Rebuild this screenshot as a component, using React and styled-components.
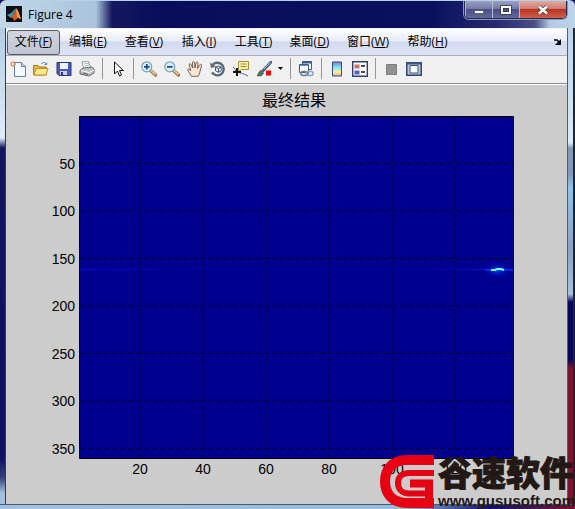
import React from 'react';
import styled, { createGlobalStyle } from 'styled-components';

const Global = createGlobalStyle`
  * { box-sizing: border-box; }
  body { margin: 0; font-family: "Open Sans", "Noto Sans CJK SC", sans-serif; font-size: 12px; color: #000; background: #0c1260; }
  button { font: inherit; color: inherit; margin: 0; }
`;

const Window = styled.main`
  position: relative;
  display: flex;
  flex-direction: column;
  min-height: 100vh;
  overflow: hidden;
  border-top: 1px solid #b4d2ee;
  border-radius: 6px 6px 0 0;
  background: linear-gradient(90deg, #c3d7e8 0, #a9c3dc 96px, #15185f 112px, #090d5c 160px, #0a0f5e 430px, #282c74 500px, #4a5089 535px, #b3cbe2 550px, #bcd4ea 100%);
`;

const TitleBar = styled.header`
  display: flex;
  align-items: flex-start;
  height: 27px;
  padding: 0 8px 0 6px;
`;

const Caption = styled.h1`
  display: flex;
  align-items: center;
  gap: 6px;
  flex: 1;
  height: 26px;
  margin: 0;
  font-size: 12px;
  font-weight: 400;
`;

const WindowButtons = styled.div`
  display: flex;
  height: 18px;
  border: 1px solid #252a4d;
  border-top: 0;
  border-radius: 0 0 5px 5px;
  overflow: hidden;
  box-shadow: 0 0 0 1px #8d96ba;
`;

const WindowButton = styled.button`
  display: grid;
  place-items: center;
  width: ${(p) => (p.$close ? 47 : 27)}px;
  padding: 0;
  border: 0;
  border-left: 1px solid #b5bad3;
  background: ${(p) => (p.$close
    ? 'linear-gradient(#e0aba2, #d07a6c 45%, #b63524 50%, #cf6048)'
    : 'linear-gradient(#9ba0c2, #757ba8 45%, #474f89 50%, #62699b)')};
`;

const Body = styled.div`
  display: grid;
  grid-template-columns: 6px minmax(0, 1fr) 8px;
  flex: 1;
`;

const LeftEdge = styled.div`
  border-right: 1px solid #303c5b;
  background: linear-gradient(#b3cde4, #dcebf8 110px, #11165e 120px, #0c1160 430px, #35447c 450px, #a4c0dc 465px);
`;

const RightEdge = styled.div`
  border-left: 1px solid #4c6077;
  border-right: 2px solid #20242c;
  background: linear-gradient(#bcd4ea, #d9eafa 115px, #8197b5 120px, #8197b5 145px, #93c1eb 160px, #8ba3c1 220px, #a8c0da 266px, #08085a 274px, #08085a 332px, #7c1330 340px);
`;

const Client = styled.div`
  display: flex;
  flex-direction: column;
  min-width: 0;
  background: #ccc;
`;

const MenuBar = styled.nav`
  display: flex;
  align-items: center;
  height: 28px;
  padding: 0 4px 0 1px;
  border-top: 1px solid #eef2fa;
  border-bottom: 1px solid #a9adba;
  background: linear-gradient(#fff, #e8ecf8 45%, #d3daee 50%, #dde3f5);
`;

const MenuButton = styled.button`
  flex: none;
  width: ${(p) => p.$width}px;
  height: 25px;
  padding: 0;
  border: 1px solid ${(p) => (p.$active ? '#555b69' : 'transparent')};
  border-radius: 3px;
  background: ${(p) => (p.$active ? 'linear-gradient(#d2d5e0, #c0c4d1)' : 'transparent')};
  line-height: 22px;
  white-space: nowrap;
`;

const DockButton = styled.button`
  display: grid;
  place-items: center;
  width: 10px;
  height: 14px;
  margin-left: auto;
  padding: 0;
  border: 0;
  background: none;
`;

const ToolBar = styled.div`
  display: flex;
  align-items: center;
  height: 28px;
  padding-bottom: 2px;
  border-bottom: 1px solid #8d8d8d;
  box-shadow: 0 1px #fff;
  background: #f0f0f0;
`;

const ToolButton = styled.button`
  display: grid;
  place-items: center;
  flex: none;
  width: ${(p) => (p.$narrow ? 11 : 23)}px;
  height: 24px;
  padding: 0;
  border: 0;
  background: none;
`;

const Separator = styled.span`
  flex: none;
  width: 1px;
  height: 21px;
  margin: 0 3px 0 4px;
  background: #979797;
`;

const Figure = styled.section`
  flex: 1;
  padding-top: 1px;
`;

const Chart = styled.svg`
  display: block;
  width: 100%;
  font-family: "Liberation Sans", "Noto Sans CJK SC", sans-serif;
  font-size: 14px;
`;

const BottomEdge = styled.div`
  height: 5px;
  border-top: 1px solid #435c75;
  background: linear-gradient(90deg, #a4c0dc, #98bcdc 70%, #101366 85%, #731531);
`;

const Watermark = styled.aside`
  position: absolute;
  right: 0;
  bottom: 0;
  display: flex;
  gap: 4px;
  height: 55px;
`;

const Brand = styled.div`
  display: flex;
  flex-direction: column;
  color: #231815;
  white-space: nowrap;
`;

const BrandName = styled.strong`
  height: 39px;
  font: 900 34px/36px "Noto Sans CJK SC", sans-serif;
  -webkit-text-stroke: 1px #231815;
`;

const BrandUrl = styled.span`
  font: 700 15px/15px "Liberation Sans", sans-serif;
`;

const Icon = ({ children, size = 16 }) => (
  <svg width={size} height={size} viewBox="0 0 16 16" fill="none" aria-hidden="true">{children}</svg>
);

const Magnifier = ({ plus }) => (
  <Icon>
    <path d="M9 9l5.5 5" stroke="#9b7754" strokeWidth="3.4" strokeLinecap="round" />
    <path d="M10 9.5l4 3.6" stroke="#efc18a" strokeWidth="1.8" strokeLinecap="round" />
    <circle cx="5.8" cy="5.8" r="5" fill="#d5f0fb" stroke="#7ca3bb" strokeWidth="1.2" />
    <path d={plus ? 'M3 5.8h5.6M5.8 3v5.6' : 'M3 5.8h5.6'} stroke="#17499a" strokeWidth="1.7" />
  </Icon>
);

const icons = {
  new: (
    <Icon>
      <path d="M4.5 1.5h7l4 4v10h-11z" fill="#f4f9ff" stroke="#6281a5" />
      <path d="M11.5 1.5v4h4" fill="#bcd5ee" stroke="#6281a5" />
      <path d="M3 0v6M0 3h6M1 1l4 4M5 1L1 5" stroke="#d46b4d" />
      <circle cx="3" cy="3" r="1.3" fill="#ffe4a0" />
    </Icon>
  ),
  open: (
    <Icon>
      <path d="M.6 14V4.5h4.5l1 1.5h7v8z" fill="#eab941" stroke="#a77b19" />
      <path d="M1 14l2-6.5h12L13 14z" fill="#ffe88a" stroke="#bc9129" />
      <path d="M8 3c2-2 4-2 5 0M11.7 3.5h2v-2" stroke="#4b78a8" />
    </Icon>
  ),
  save: (
    <Icon>
      <path d="M1 1.5h14v13H3l-2-2z" fill="#4c59b5" stroke="#293477" />
      <path d="M4 2h8v6H4z" fill="#eef3ff" />
      <path d="M4 10h7v4H4z" fill="#cbd0e8" />
      <path d="M5 11h2v3H5z" fill="#28336d" />
    </Icon>
  ),
  print: (
    <Icon>
      <path d="M5 8L3 1l6-1 3 7" fill="#fff" stroke="#8a95a6" />
      <path d="M5 3l4-1M6 5l4-1" stroke="#9aabc0" />
      <path d="M1 9.5L4 7l9-1 2 2v4l-5 3-9-2z" fill="#bcbfc2" stroke="#656b72" />
      <path d="M2 9.5l8 2 5-2.5" stroke="#fff" />
      <path d="M4 12l5 1.5" stroke="#51565b" />
    </Icon>
  ),
  pointer: (
    <Icon>
      <path d="M4.5 1v12l3-3 2 5 2-1-2-4.5h4z" fill="#fff" stroke="#111" />
    </Icon>
  ),
  zoomIn: <Magnifier plus />,
  zoomOut: <Magnifier />,
  hand: (
    <Icon>
      <path d="M4.5 15.3L.8 9.2C.2 8 1.9 7.2 3.8 9.6L2.2 4c-.2-1.5 1.5-1.8 2-.3L5.8 7l-.4-5.2c0-1.6 2-1.6 2.2 0L8 7l1-5c.4-1.5 2.2-1.1 2 .4L10.5 7.5l2.2-3.6c.8-1.2 2.4-.4 1.8 1L13 10.4c-.4 2.2-1.1 3.4-2 4.9z" fill="#ffe5d1" stroke="#65534a" strokeWidth=".9" />
    </Icon>
  ),
  rotate: (
    <Icon>
      <path d="M3 3.5a6.3 6.3 0 1 1-1 7.8" stroke="#59677c" strokeWidth="2.4" />
      <path d="M0 1.5l1 5.5 5-1.5z" fill="#59677c" />
      <path d="M5.5 6.2L8.4 5l2.8 1.2v3.5L8.4 11.3 5.5 9.8zM5.5 6.2l2.9 1.3 2.8-1.3M8.4 7.5v3.8" fill="#edf3f9" stroke="#435570" />
    </Icon>
  ),
  cursor: (
    <Icon>
      <path d="M5.5.5h10v8h-7l-3 2z" fill="#fff0a2" stroke="#a59243" />
      <path d="M7.5 3h6M7.5 5.5h6" stroke="#9d8b45" />
      <path d="M0 6c2 1 2 4 4 5s6 1 11 4" stroke="#5a61bf" />
      <path d="M4 7v8M0 11h8" stroke="#111" strokeWidth="2" />
    </Icon>
  ),
  brush: (
    <Icon>
      <path d="M15 1L7.2 9.5" stroke="#485b7b" strokeWidth="2.8" strokeLinecap="round" />
      <path d="M14.5 1L8 8" stroke="#b9cbe0" />
      <path d="M1 14.5c2-1 1.4-3.6 3.8-5l2.6 2.3C6.6 14.7 3.6 15.4 1 14.5z" fill="#567b58" stroke="#3a4b42" />
      <path d="M10 9.5h5v5h-5z" fill="#f10909" />
    </Icon>
  ),
  link: (
    <Icon>
      <path d="M4.5 .5h9v8h-9z" fill="#fff" stroke="#3a5b8c" />
      <path d="M4.5 1.5h9" stroke="#3a5b8c" strokeWidth="2" />
      <path d="M1.5 3.5h9v8h-9z" fill="#fff" stroke="#3a5b8c" />
      <path d="M2 4.5h8" stroke="#6e90c0" />
      <rect x="3" y="10.5" width="7" height="4" rx="2" stroke="#697a8d" strokeWidth="1.6" />
      <rect x="8" y="10.5" width="7" height="4" rx="2" stroke="#8da1b5" strokeWidth="1.6" />
    </Icon>
  ),
  colorbar: (
    <Icon>
      <defs>
        <linearGradient id="colorbar-fill" x2="0" y2="1">
          <stop stopColor="#7182d7" /><stop offset=".4" stopColor="#83e3ef" /><stop offset=".72" stopColor="#fff3a0" /><stop offset="1" stopColor="#edac91" />
        </linearGradient>
      </defs>
      <path d="M3.5 1h9v14h-9z" fill="url(#colorbar-fill)" stroke="#344d7b" />
    </Icon>
  ),
  legend: (
    <Icon>
      <path d="M.7.7h14.6v14.6H.7z" fill="#fff" stroke="#303f68" strokeWidth="1.4" />
      <path d="M2.5 3.5h5v4h-5z" fill="#d86a64" />
      <path d="M2.5 9.5h5v4h-5z" fill="#5263ce" />
      <path d="M9 5h4M9 11h4" stroke="#111" strokeWidth="1.3" />
    </Icon>
  ),
  hide: (
    <Icon><path d="M3.5 3.5h10v10h-10z" fill="#919191" stroke="#808080" /></Icon>
  ),
  show: (
    <Icon>
      <path d="M.8 1.8h14.4v12.4H.8z" fill="#b9c8e0" stroke="#304369" strokeWidth="1.5" />
      <path d="M1 2.5h14" stroke="#3a568b" strokeWidth="2" />
      <path d="M4 4.5h8v7.5H4z" fill="#fff" stroke="#3c5279" />
    </Icon>
  ),
};

const menus = [
  ['文件', 'F', 53], ['编辑', 'E', 56], ['查看', 'V', 56], ['插入', 'I', 54],
  ['工具', 'T', 55], ['桌面', 'D', 57], ['窗口', 'W', 60], ['帮助', 'H', 59],
];

const tools = [
  [['new', '新建'], ['open', '打开'], ['save', '保存'], ['print', '打印']],
  [['pointer', '编辑绘图']],
  [['zoomIn', '放大'], ['zoomOut', '缩小'], ['hand', '平移'], ['rotate', '三维旋转'], ['cursor', '数据游标'], ['brush', '刷亮'], ['more', '更多颜色']],
  [['link', '链接绘图']],
  [['colorbar', '插入颜色栏'], ['legend', '插入图例']],
  [['hide', '隐藏绘图工具'], ['show', '显示绘图工具']],
];

const xTicks = [20, 40, 60, 80, 100, 120];
const yTicks = [50, 100, 150, 200, 250, 300, 350];
const xAt = (v) => 71 + v * 3.15;
const yAt = (v) => 32 + v * 0.95;

const MatlabLogo = () => (
  <svg width="16" height="16" viewBox="0 0 16 16" aria-hidden="true">
    <path d="M0 0h16v16H0z" fill="#081017" />
    <path d="M1 9l4-2 3-3 2-2-3 8-2 2z" fill="#438fa8" />
    <path d="M5 12l3-4 2-6 2 3 3 8-3-1-4 3-1-3z" fill="#df5426" />
    <path d="M10 2l2 3 3 8-4-2z" fill="#f8a13c" />
  </svg>
);

const ResultChart = () => (
  <Chart viewBox="0 1 561 419" role="img" aria-label="最终结果">
    <defs>
      <radialGradient id="peak-glow">
        <stop stopColor="#126cff" stopOpacity=".8" />
        <stop offset=".5" stopColor="#0820e8" stopOpacity=".35" />
        <stop offset="1" stopColor="#00008f" stopOpacity="0" />
      </radialGradient>
      <linearGradient id="trace">
        <stop stopColor="#0000e0" /><stop offset=".2" stopColor="#0000a4" /><stop offset=".8" stopColor="#0000a4" /><stop offset="1" stopColor="#0012ff" />
      </linearGradient>
    </defs>
    <text x="288" y="22" textAnchor="middle" fontSize="16">最终结果</text>
    <path d="M73.5 32.5h434v342h-434z" fill="#00008f" stroke="#000" />
    <path d="M74 185h433v1H74z" fill="url(#trace)" />
    {xTicks.map((v) => <path key={v} d={`M${xAt(v)} 33V374`} stroke="#000030" strokeDasharray="5 3" />)}
    {yTicks.map((v) => <path key={v} d={`M74 ${yAt(v)}H507`} stroke="#000030" strokeDasharray="5 3" />)}
    <ellipse cx="491" cy="186" rx="16" ry="9" fill="url(#peak-glow)" />
    <path d="M479 186h28" stroke="#0747f8" />
    <path d="M485 186h4l2-1h4l3 1" stroke="#72ffe8" strokeWidth="2" fill="none" />
    {xTicks.map((v) => <text key={v} x={xAt(v)} y="390" textAnchor="middle">{v}</text>)}
    {yTicks.map((v) => <text key={v} x="69" y={yAt(v) + 5} textAnchor="end">{v}</text>)}
  </Chart>
);

const BrandMark = () => (
  <svg width="54" height="54" viewBox="0 0 54 54" fill="none" stroke="#e60012" aria-hidden="true">
    <path d="M54 6H27C12 6 5 16 5 27.500S12 49 27 49H54" strokeWidth="10" />
    <path d="M54 19H29C22 19 18 23 18 29S22 39.500 29 39.500H46" strokeWidth="6" />
    <path d="M30 29.500H49V54" strokeWidth="8" />
  </svg>
);

export default function App() {
  return (
    <>
      <Global />
      <Window>
        <TitleBar>
          <Caption><MatlabLogo />Figure 4</Caption>
          <WindowButtons>
            <WindowButton aria-label="最小化"><Icon><path d="M3.5 8.5h9v3h-9z" fill="#fff" stroke="#444" strokeWidth=".7" /></Icon></WindowButton>
            <WindowButton aria-label="最大化"><Icon><path d="M4 5h8v6H4z" stroke="#333" strokeWidth="3.4" /><path d="M4 5h8v6H4z" stroke="#fff" strokeWidth="2" /></Icon></WindowButton>
            <WindowButton $close aria-label="关闭"><Icon><path d="M4 4.5l8 7M12 4.5l-8 7" stroke="#593b41" strokeWidth="4" /><path d="M4 4.5l8 7M12 4.5l-8 7" stroke="#fff" strokeWidth="2.5" /></Icon></WindowButton>
          </WindowButtons>
        </TitleBar>
        <Body>
          <LeftEdge />
          <Client>
            <MenuBar>
              {menus.map(([label, key, width], i) => (
                <MenuButton key={key} $width={width} $active={i === 0}>{label}(<u>{key}</u>)</MenuButton>
              ))}
              <DockButton aria-label="停靠">
                <svg width="8" height="8" viewBox="0 0 8 8"><path d="M0 2h3l2 2" fill="none" stroke="#000" strokeWidth="1.5" /><path d="M7 1v6H1z" /></svg>
              </DockButton>
            </MenuBar>
            <ToolBar>
              {tools.map((group, i) => (
                <React.Fragment key={group[0][0]}>
                  {i > 0 && <Separator />}
                  {group.map(([name, label]) => (
                    <ToolButton key={name} aria-label={label} $narrow={name === 'more'}>
                      {name === 'more'
                        ? <svg width="5" height="3" viewBox="0 0 5 3"><path d="M0 0h5L2.5 3z" /></svg>
                        : icons[name]}
                    </ToolButton>
                  ))}
                </React.Fragment>
              ))}
            </ToolBar>
            <Figure><ResultChart /></Figure>
          </Client>
          <RightEdge />
        </Body>
        <BottomEdge />
        <Watermark>
          <BrandMark />
          <Brand>
            <BrandName>谷速软件</BrandName>
            <BrandUrl>www.gususoft.com</BrandUrl>
          </Brand>
        </Watermark>
      </Window>
    </>
  );
}
